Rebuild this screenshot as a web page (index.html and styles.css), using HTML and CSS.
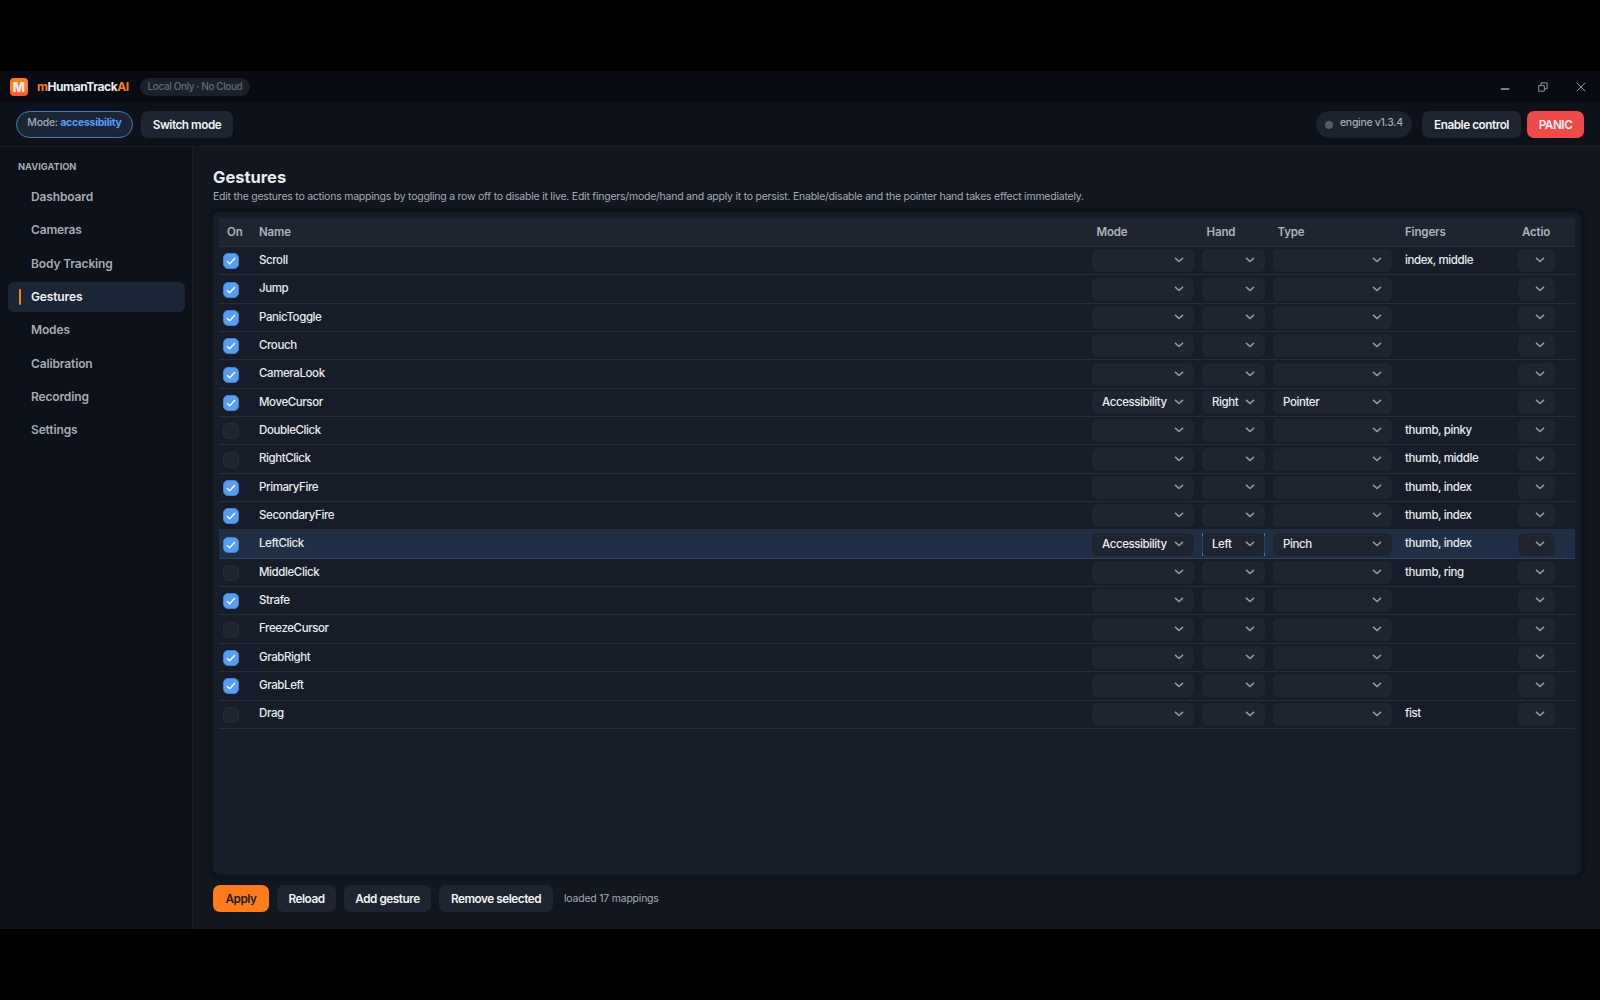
FILE: index.html
```html
<!DOCTYPE html>
<html lang="en">
<head>
  <meta charset="UTF-8" />
  <title>mHumanTrackAI</title>
  <link rel="stylesheet" href="styles.css">
</head>
<body>
  <div class="app">
    <header class="titlebar">
      <div class="logo">M</div>
      <div class="brand"><span>m</span>HumanTrack<span>AI</span></div>
      <div class="tag">Local Only · No Cloud</div>
      <div class="window-controls">
        <svg width="10" height="10" viewBox="0 0 10 10"><path d="M.7 7h8.6" stroke-width="1.6"/></svg>
        <svg width="10" height="10" viewBox="0 0 10 10"><path d="M.7 3.6h5.6v5.6H.7zM3 3.4V.9h6.1v5.9H6.6"/></svg>
        <svg width="10" height="10" viewBox="0 0 10 10"><path d="M.7.7l8.6 8.6M9.3.7L.7 9.3"/></svg>
      </div>
    </header>

    <div class="toolbar">
      <div class="mode-pill">Mode: <b>accessibility</b></div>
      <button class="btn switch">Switch mode</button>
      <div class="engine"><i></i><span>engine v1.3.4</span></div>
      <button class="btn enable">Enable control</button>
      <button class="btn panic">PANIC</button>
    </div>

    <div class="body">
      <nav class="sidebar">
        <div class="nav-title">NAVIGATION</div>
        <a class="nav-item">Dashboard</a>
        <a class="nav-item">Cameras</a>
        <a class="nav-item">Body Tracking</a>
        <a class="nav-item active">Gestures</a>
        <a class="nav-item">Modes</a>
        <a class="nav-item">Calibration</a>
        <a class="nav-item">Recording</a>
        <a class="nav-item">Settings</a>
      </nav>

      <main class="content">
        <h1>Gestures</h1>
        <p class="hint">Edit the gestures to actions mappings by toggling a row off to disable it live. Edit fingers/mode/hand and apply it to persist. Enable/disable and the pointer hand takes effect immediately.</p>
        <div class="card">
          <div class="row head">
            <div>On</div><div>Name</div><div>Mode</div><div>Hand</div><div>Type</div><div>Fingers</div><div>Actio</div>
          </div>
          <div id="rows"></div>
        </div>
        <div class="actions">
          <button class="btn apply">Apply</button>
          <button class="btn reload">Reload</button>
          <button class="btn add">Add gesture</button>
          <button class="btn remove">Remove selected</button>
          <span class="status">loaded 17 mappings</span>
        </div>
      </main>
    </div>
  </div>

  <script>
    const gestures = [
      { name: "Scroll", on: true, fingers: "index, middle" },
      { name: "Jump", on: true },
      { name: "PanicToggle", on: true },
      { name: "Crouch", on: true },
      { name: "CameraLook", on: true },
      { name: "MoveCursor", on: true, mode: "Accessibility", hand: "Right", type: "Pointer" },
      { name: "DoubleClick", on: false, fingers: "thumb, pinky" },
      { name: "RightClick", on: false, fingers: "thumb, middle" },
      { name: "PrimaryFire", on: true, fingers: "thumb, index" },
      { name: "SecondaryFire", on: true, fingers: "thumb, index" },
      { name: "LeftClick", on: true, mode: "Accessibility", hand: "Left", type: "Pinch", fingers: "thumb, index", selected: true },
      { name: "MiddleClick", on: false, fingers: "thumb, ring" },
      { name: "Strafe", on: true },
      { name: "FreezeCursor", on: false },
      { name: "GrabRight", on: true },
      { name: "GrabLeft", on: true },
      { name: "Drag", on: false, fingers: "fist" }
    ];

    const check = `<svg width="10" height="8" viewBox="0 0 10 8"><path d="M1 4.2L3.7 6.8L9 1"/></svg>`;
    const chevron = `<svg width="10" height="6" viewBox="0 0 10 6"><path d="M1 .9L5 4.6L9 .9"/></svg>`;

    function select(value, cls) {
      return `<div class="cell"><div class="select ${cls}"><span>${value || ""}</span>${chevron}</div></div>`;
    }

    document.getElementById("rows").innerHTML = gestures.map(g => `
      <div class="row ${g.selected ? "selected" : ""}">
        <div class="cell"><div class="check ${g.on ? "on" : ""}">${g.on ? check : ""}</div></div>
        <div class="cell text">${g.name}</div>
        ${select(g.mode, "mode")}
        ${select(g.hand, g.selected ? "hand focus" : "hand")}
        ${select(g.type, "type")}
        <div class="cell text">${g.fingers || ""}</div>
        ${select("", "action")}
      </div>`).join("");
  </script>
</body>
</html>
```
FILE: styles.css
```css
:root {
  --panel: #0d1119;
  --card: #171d28;
  --raised: #1e2531;
  --line: #262d38;
  --text: #e9ecf0;
  --muted: #a5abb3;
  --blue: #559df6;
  --orange: #ff7b1c;
}

* {
  box-sizing: border-box;
}

body {
  margin: 0;
  height: 1000px;
  padding: 71px 0;
  background: #000;
  color: var(--text);
  font-family: Inter, sans-serif;
  font-size: 11.5px;
  overflow: hidden;
}

.app {
  height: 858px;
  display: flex;
  flex-direction: column;
  background: #12161e;
}

svg {
  fill: none;
  display: block;
}

.titlebar {
  height: 32px;
  display: flex;
  align-items: center;
  padding: 0 14px 0 10px;
  background: #080b12;
}

.logo {
  width: 18px;
  height: 18px;
  border-radius: 4px;
  background: linear-gradient(#ff7f1d 60%, #f9503c);
  font-size: 13px;
  font-weight: 800;
  line-height: 18px;
  text-align: center;
}

.brand {
  width: 103px;
  margin-left: 9px;
  padding-bottom: 1px;
  font-size: 12px;
  font-weight: 700;
  letter-spacing: -0.43px;
  white-space: nowrap;
}

.brand span {
  color: var(--orange);
}

.tag {
  width: 110px;
  height: 18px;
  border-radius: 9px;
  background: #1a212b;
  color: #636b72;
  font-size: 10px;
  font-weight: 500;
  letter-spacing: -0.4px;
  line-height: 17px;
  text-align: center;
  white-space: nowrap;
}

.window-controls {
  margin-left: auto;
  display: flex;
  gap: 28px;
}

.window-controls svg {
  stroke: #9299a1;
}

.toolbar {
  height: 44px;
  display: flex;
  align-items: flex-start;
  padding: 8px 16px;
  background: var(--panel);
  border-bottom: 1px solid #1b212b;
}

.mode-pill {
  width: 117px;
  height: 27px;
  margin-right: 8px;
  border: 1px solid #4379bd;
  border-radius: 14px;
  background: #1a2635;
  color: var(--muted);
  font-size: 10.5px;
  font-weight: 500;
  letter-spacing: -0.27px;
  line-height: 22px;
  text-align: center;
  white-space: nowrap;
}

.mode-pill b {
  color: var(--blue);
}

.btn {
  height: 27px;
  padding: 0;
  border: 0;
  border-radius: 7px;
  background: var(--raised);
  color: #f1f3f5;
  font-family: inherit;
  font-size: 11.75px;
  font-weight: 600;
  letter-spacing: -0.46px;
  line-height: 26px;
  text-align: center;
  white-space: nowrap;
}

.switch { width: 92px; }
.enable { width: 99px; }

.panic {
  width: 57px;
  margin-left: 6px;
  background: #ef4a4a;
}

.engine {
  width: 96px;
  height: 27px;
  margin-left: auto;
  margin-right: 10px;
  padding-left: 9px;
  display: flex;
  align-items: center;
  border-radius: 14px;
  background: #1c232e;
  color: var(--muted);
  font-size: 10.5px;
  font-weight: 500;
  letter-spacing: -0.3px;
  white-space: nowrap;
}

.engine i {
  width: 8px;
  height: 8px;
  margin-right: 7px;
  border-radius: 50%;
  background: #535d62;
}

.engine span {
  padding-bottom: 4px;
}

.body {
  flex: 1;
  min-height: 0;
  display: flex;
}

.sidebar {
  width: 193px;
  padding: 14px 7px 0 8px;
  background: var(--panel);
  border-right: 1px solid #1b212b;
}

.nav-title {
  height: 20.5px;
  padding-left: 10px;
  color: var(--muted);
  font-size: 9.25px;
  font-weight: 700;
  line-height: 12px;
}

.nav-item {
  height: 30px;
  margin-bottom: 3.35px;
  padding-left: 23px;
  display: flex;
  align-items: center;
  border-radius: 6px;
  color: var(--muted);
  font-size: 12px;
  font-weight: 600;
  letter-spacing: -0.14px;
}

.nav-item.active {
  padding-left: 11px;
  background: #1a2636;
  color: #f1f3f5;
}

.nav-item.active::before {
  content: "";
  width: 2px;
  height: 16px;
  margin-right: 10px;
  border-radius: 2px;
  background: var(--orange);
}

.content {
  flex: 1;
  min-width: 0;
  padding: 20px 19px 0 20px;
}

h1 {
  margin: 0;
  font-size: 16.5px;
  font-weight: 700;
  line-height: 21px;
}

.hint {
  margin: 0 0 8px;
  padding-top: 1px;
  color: var(--muted);
  font-size: 10.5px;
  letter-spacing: -0.235px;
  line-height: 15px;
  white-space: nowrap;
}

.card {
  height: 663px;
  padding: 6px;
  border-radius: 8px;
  background: var(--card);
  box-shadow: 0 0 0 4px #0e1219, 0 0 2px 4px #0e1219;
}

.row {
  height: 28.35px;
  display: grid;
  grid-template-columns: 34px 1fr 110px 71px 127.5px 117px 59px;
  border-bottom: 1px solid var(--line);
}

.head {
  height: 29px;
  background: var(--raised);
  color: #adb3ba;
  font-size: 11.5px;
  font-weight: 600;
  letter-spacing: -0.15px;
  line-height: 28px;
}

.head div {
  padding-left: 6px;
}

.head div:first-child {
  padding-left: 8px;
}

.row.selected {
  background: #1f2f46;
  border-color: #31425a;
}

.cell {
  display: flex;
  align-items: center;
}

.cell.text {
  padding: 0 0 1.5px 6px;
  font-weight: 500;
  letter-spacing: -0.4px;
}

.check {
  width: 16px;
  height: 16px;
  margin: 1px 0 0 4px;
  display: flex;
  align-items: center;
  justify-content: center;
  border: 1px solid #252c37;
  border-radius: 5px;
  background: var(--raised);
}

.check.on {
  border-color: #4782cb;
  background: var(--blue);
}

.check svg {
  stroke: #fff;
  stroke-width: 1.4;
}

.select {
  height: 23px;
  margin-left: 1.5px;
  padding: 0 10px 1px;
  display: flex;
  align-items: center;
  justify-content: space-between;
  border-radius: 6px;
  background: var(--raised);
  font-weight: 500;
  letter-spacing: -0.4px;
}

.select svg {
  flex: none;
  stroke: #939aa3;
  stroke-width: 1.5;
}

.select.mode { width: 101.5px; }
.select.hand { width: 63px; }
.select.type { width: 119px; }
.select.action { width: 37px; }

/* focus shows up only in the corners of the rounded box */
.select.focus {
  position: relative;
}

.select.focus::before,
.select.focus::after {
  content: "";
  position: absolute;
  top: 0;
  bottom: 0;
  width: 1px;
  background: linear-gradient(#4379bd 3px, #2b4162 3px, #2b4162 20px, #4379bd 20px);
}

.select.focus::before { left: 0; }
.select.focus::after { right: 0; }

.actions {
  margin-top: 10px;
  display: flex;
  align-items: center;
  gap: 8px;
}

.apply {
  width: 56px;
  background: var(--orange);
  color: #1b1b22;
}

.reload { width: 59px; }
.add { width: 87px; }
.remove { width: 114px; }

.status {
  margin-left: 3px;
  color: var(--muted);
  font-size: 10.5px;
  letter-spacing: -0.22px;
}
```
